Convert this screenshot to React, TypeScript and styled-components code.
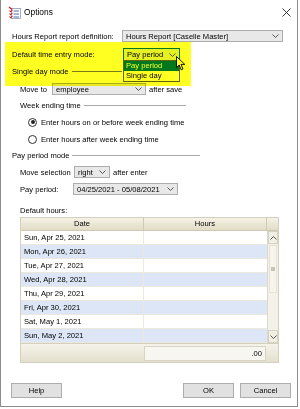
import styled, { createGlobalStyle } from 'styled-components';

const GlobalStyle = createGlobalStyle`
  html, body {
    margin: 0;
    padding: 0;
    background: #ffffff;
  }
  body {
    font-family: "Liberation Sans", Arial, sans-serif;
    font-size: 7.6px;
    color: #000;
  }
`;

const days = [
  'Sun, Apr 25, 2021',
  'Mon, Apr 26, 2021',
  'Tue, Apr 27, 2021',
  'Wed, Apr 28, 2021',
  'Thu, Apr 29, 2021',
  'Fri, Apr 30, 2021',
  'Sat, May 1, 2021',
  'Sun, May 2, 2021',
];

function Chevron({ up }: { up?: boolean }) {
  return (
    <svg width="7" height="4" viewBox="0 0 7 4">
      <path
        d={up ? 'M0.5 3.5 L3.5 0.5 L6.5 3.5' : 'M0.5 0.5 L3.5 3.5 L6.5 0.5'}
        fill="none"
        stroke="#444"
        strokeWidth="0.9"
      />
    </svg>
  );
}

function TitleIcon() {
  return (
    <svg width="13" height="13" viewBox="0 0 13 13">
      <rect x="3.5" y="2.5" width="9" height="10" fill="#fff" stroke="#8a98b0" strokeWidth="0.8" />
      <path d="M5.5 5 H11 M5.5 8 H11 M5.5 11 H11" stroke="#4a6fb0" strokeWidth="1" />
      <path d="M1 1 L4 3.5" stroke="#d02020" strokeWidth="1.3" />
      <path d="M1.5 4.5 L2.6 5.8 L4.5 3.8" fill="none" stroke="#d02020" strokeWidth="1.1" />
      <path d="M1.5 7.5 L2.6 8.8 L4.5 6.8" fill="none" stroke="#d02020" strokeWidth="1.1" />
      <path d="M1.5 10.5 L2.6 11.8 L4.5 9.8" fill="none" stroke="#d02020" strokeWidth="1.1" />
    </svg>
  );
}

export default function App() {
  return (
    <>
      <GlobalStyle />
      <S.Window>
        <S.TitleBar>
          <S.TitleLeft>
            <TitleIcon />
            <S.Title>Options</S.Title>
          </S.TitleLeft>
          <svg width="9" height="9" viewBox="0 0 9 9">
            <path d="M0.5 0.5 L8.5 8.5 M8.5 0.5 L0.5 8.5" stroke="#222" strokeWidth="0.9" />
          </svg>
        </S.TitleBar>

        <S.Body>
          <S.Row $top={6}>
            <S.Label $width={110}>Hours Report report definition:</S.Label>
            <S.Combo $width={161}>
              <span>Hours Report [Caselle Master]</span>
              <Chevron />
            </S.Combo>
          </S.Row>

          <S.Row $top={6} $height={13}>
            <S.Label $width={111}>Default time entry mode:</S.Label>
            <S.Combo $width={57} $focused>
              <span>Pay period</span>
              <Chevron />
              <S.DropList>
                <S.DropItem $selected>Pay period</S.DropItem>
                <S.DropItem>Single day</S.DropItem>
              </S.DropList>
            </S.Combo>
          </S.Row>

          <S.Row $top={4}>
            <S.GroupHeader $width={110} $line="#7c7c7c">
              <span>Single day mode</span>
            </S.GroupHeader>
          </S.Row>

          <S.Row $top={6} $indent={8}>
            <S.Label $width={32}>Move to</S.Label>
            <S.Combo $width={94}>
              <span>employee</span>
              <Chevron />
            </S.Combo>
            <S.After>after save</S.After>
          </S.Row>

          <S.Row $top={4} $indent={8}>
            <S.GroupHeader $width={166}>
              <span>Week ending time</span>
            </S.GroupHeader>
          </S.Row>

          <S.Row $top={5} $indent={16}>
            <S.Radio $checked />
            <span>Enter hours on or before week ending time</span>
          </S.Row>

          <S.Row $top={5} $indent={16}>
            <S.Radio />
            <span>Enter hours after week ending time</span>
          </S.Row>

          <S.Row $top={4}>
            <S.GroupHeader $width={188}>
              <span>Pay period mode</span>
            </S.GroupHeader>
          </S.Row>

          <S.Row $top={5} $indent={8}>
            <S.Label $width={54}>Move selection</S.Label>
            <S.Combo $width={36}>
              <span>right</span>
              <Chevron />
            </S.Combo>
            <S.After>after enter</S.After>
          </S.Row>

          <S.Row $top={5} $indent={8}>
            <S.Label $width={53}>Pay period:</S.Label>
            <S.Combo $width={105}>
              <span>04/25/2021 - 05/08/2021</span>
              <Chevron />
            </S.Combo>
          </S.Row>

          <S.Row $top={9} $indent={8}>
            <span>Default hours:</span>
          </S.Row>

          <S.Grid>
            <S.GridHeader>
              <S.HeadCell>Date</S.HeadCell>
              <S.HeadCell>Hours</S.HeadCell>
              <S.HeadCorner />
            </S.GridHeader>
            <S.GridBody>
              <S.Rows>
                {days.map((d, i) => (
                  <S.DataRow key={d} $alt={i % 2 === 1}>
                    <S.DateCell>{d}</S.DateCell>
                    <div />
                  </S.DataRow>
                ))}
              </S.Rows>
              <S.ScrollBar>
                <S.ScrollButton>
                  <Chevron up />
                </S.ScrollButton>
                <S.Track>
                  <S.Thumb>
                    <S.Grip />
                  </S.Thumb>
                </S.Track>
                <S.ScrollButton>
                  <Chevron />
                </S.ScrollButton>
              </S.ScrollBar>
            </S.GridBody>
            <S.GridFooter>
              <S.TotalBox>.00</S.TotalBox>
            </S.GridFooter>
          </S.Grid>
        </S.Body>

        <S.ButtonBar>
          <S.Button>Help</S.Button>
          <S.ButtonGroup>
            <S.Button>OK</S.Button>
            <S.Button>Cancel</S.Button>
          </S.ButtonGroup>
        </S.ButtonBar>

        <S.Cursor>
          <svg width="11" height="15" viewBox="0 0 11 15">
            <path
              d="M0.5 0.5 L0.5 11.5 L3.2 9 L5.2 13.8 L7 13 L5 8.4 L8.8 8.4 Z"
              fill="#fff"
              stroke="#000"
              strokeWidth="0.9"
              strokeLinejoin="round"
            />
          </svg>
        </S.Cursor>
        <S.Highlight />
      </S.Window>
    </>
  );
}

const S = {
  Window: styled.div`
    position: relative;
    box-sizing: border-box;
    width: 298px;
    height: 407px;
    border: 1px solid #8c8c8c;
    border-top: none;
    background: #fff;
    display: flex;
    flex-direction: column;
  `,
  TitleBar: styled.div`
    height: 24px;
    display: flex;
    align-items: center;
    justify-content: space-between;
    padding: 0 6px 0 7px;
  `,
  TitleLeft: styled.div`
    display: flex;
    align-items: center;
    gap: 3px;
  `,
  Title: styled.span`
    font-size: 8.4px;
  `,
  Body: styled.div`
    display: flex;
    flex-direction: column;
    padding-left: 11px;
  `,
  Row: styled.div<{ $top: number; $height?: number; $indent?: number }>`
    display: flex;
    align-items: center;
    height: ${(p) => p.$height ?? 12}px;
    margin-top: ${(p) => p.$top}px;
    margin-left: ${(p) => p.$indent ?? 0}px;
    white-space: nowrap;
  `,
  Label: styled.span<{ $width: number }>`
    width: ${(p) => p.$width}px;
    flex-shrink: 0;
  `,
  After: styled.span`
    margin-left: 3px;
  `,
  Combo: styled.div<{ $width: number; $focused?: boolean }>`
    position: relative;
    box-sizing: border-box;
    width: ${(p) => p.$width}px;
    height: 100%;
    display: flex;
    align-items: center;
    justify-content: space-between;
    padding: 0 3px 0 3px;
    border: 1px solid ${(p) => (p.$focused ? '#0078d7' : '#adadad')};
    background: ${(p) => (p.$focused ? '#e5f1fb' : '#e8e8e8')};
    span {
      overflow: hidden;
    }
  `,
  DropList: styled.div`
    position: absolute;
    z-index: 5;
    top: 100%;
    left: -1px;
    box-sizing: border-box;
    width: calc(100% + 2px);
    border: 1px solid #646464;
    background: #fff;
  `,
  DropItem: styled.div<{ $selected?: boolean }>`
    height: 10px;
    line-height: 10px;
    padding-left: 2px;
    background: ${(p) => (p.$selected ? '#0078d7' : '#fff')};
    color: ${(p) => (p.$selected ? '#fff' : '#000')};
  `,
  GroupHeader: styled.div<{ $width: number; $line?: string }>`
    display: flex;
    align-items: center;
    flex-shrink: 0;
    width: ${(p) => p.$width}px;
    &::after {
      content: '';
      flex: 1;
      height: 1px;
      margin-left: 3px;
      background: ${(p) => p.$line ?? '#a9a9a9'};
    }
  `,
  Radio: styled.span<{ $checked?: boolean }>`
    box-sizing: border-box;
    width: 9px;
    height: 9px;
    margin-right: 4px;
    border-radius: 50%;
    border: 1px solid #333;
    background: #fff;
    display: flex;
    align-items: center;
    justify-content: center;
    &::after {
      content: '';
      width: 4px;
      height: 4px;
      border-radius: 50%;
      background: #222;
      display: ${(p) => (p.$checked ? 'block' : 'none')};
    }
  `,
  Grid: styled.div`
    box-sizing: border-box;
    width: 259px;
    height: 146px;
    margin: 1px 0 0 8px;
    border: 1px solid #d4d0c0;
    display: flex;
    flex-direction: column;
  `,
  GridHeader: styled.div`
    height: 12px;
    display: flex;
    background: linear-gradient(#f5f2e6, #e2dcc6);
    border-bottom: 1px solid #cfc9b3;
  `,
  HeadCell: styled.div`
    box-sizing: border-box;
    width: 123px;
    text-align: center;
    line-height: 12px;
    border-right: 1px solid #cfc9b3;
  `,
  HeadCorner: styled.div`
    flex: 1;
  `,
  GridBody: styled.div`
    display: flex;
    height: 112px;
  `,
  Rows: styled.div`
    width: 246px;
    display: flex;
    flex-direction: column;
  `,
  DataRow: styled.div<{ $alt: boolean }>`
    box-sizing: border-box;
    height: 14px;
    display: grid;
    grid-template-columns: 123px 123px;
    align-items: center;
    background: ${(p) => (p.$alt ? '#dce6f6' : '#ffffff')};
    border-bottom: 1px solid #ebe8dc;
  `,
  DateCell: styled.div`
    box-sizing: border-box;
    height: 100%;
    padding-left: 3px;
    display: flex;
    align-items: center;
    border-right: 1px solid #ebe8dc;
  `,
  ScrollBar: styled.div`
    flex: 1;
    display: flex;
    flex-direction: column;
    background: #f3f1e8;
    border-left: 1px solid #ddd9c8;
  `,
  ScrollButton: styled.div`
    box-sizing: border-box;
    height: 13px;
    display: flex;
    align-items: center;
    justify-content: center;
    background: #f1efe4;
    border: 1px solid #d6d2c0;
  `,
  Track: styled.div`
    flex: 1;
    padding-top: 1px;
  `,
  Thumb: styled.div`
    box-sizing: border-box;
    height: 48px;
    margin: 0 1px;
    display: flex;
    align-items: center;
    justify-content: center;
    background: #f6f4ec;
    border: 1px solid #e6e2d3;
  `,
  Grip: styled.div`
    width: 4px;
    height: 4px;
    background: #c8c4b4;
  `,
  GridFooter: styled.div`
    flex: 1;
    display: flex;
    align-items: center;
    background: linear-gradient(#f5f3ea, #e4e0cd);
    border-top: 1px solid #d4d0c0;
  `,
  TotalBox: styled.div`
    box-sizing: border-box;
    width: 122px;
    height: 15px;
    margin-left: 123px;
    padding-right: 3px;
    display: flex;
    align-items: center;
    justify-content: flex-end;
    background: #f7f6f0;
    border: 1px solid #d8d4c3;
  `,
  ButtonBar: styled.div`
    display: flex;
    justify-content: space-between;
    margin-top: 20px;
    padding: 0 6px 0 10px;
  `,
  ButtonGroup: styled.div`
    display: flex;
    gap: 6px;
  `,
  Button: styled.div`
    box-sizing: border-box;
    width: 51px;
    height: 15px;
    display: flex;
    align-items: center;
    justify-content: center;
    background: #e1e1e1;
    border: 1px solid #adadad;
  `,
  Cursor: styled.div`
    position: absolute;
    z-index: 6;
    left: 175px;
    top: 56px;
    width: 11px;
    height: 15px;
  `,
  Highlight: styled.div`
    position: absolute;
    z-index: 10;
    left: 4px;
    top: 42px;
    width: 186px;
    height: 44px;
    background: #ffff22;
    mix-blend-mode: multiply;
    pointer-events: none;
  `,
};
